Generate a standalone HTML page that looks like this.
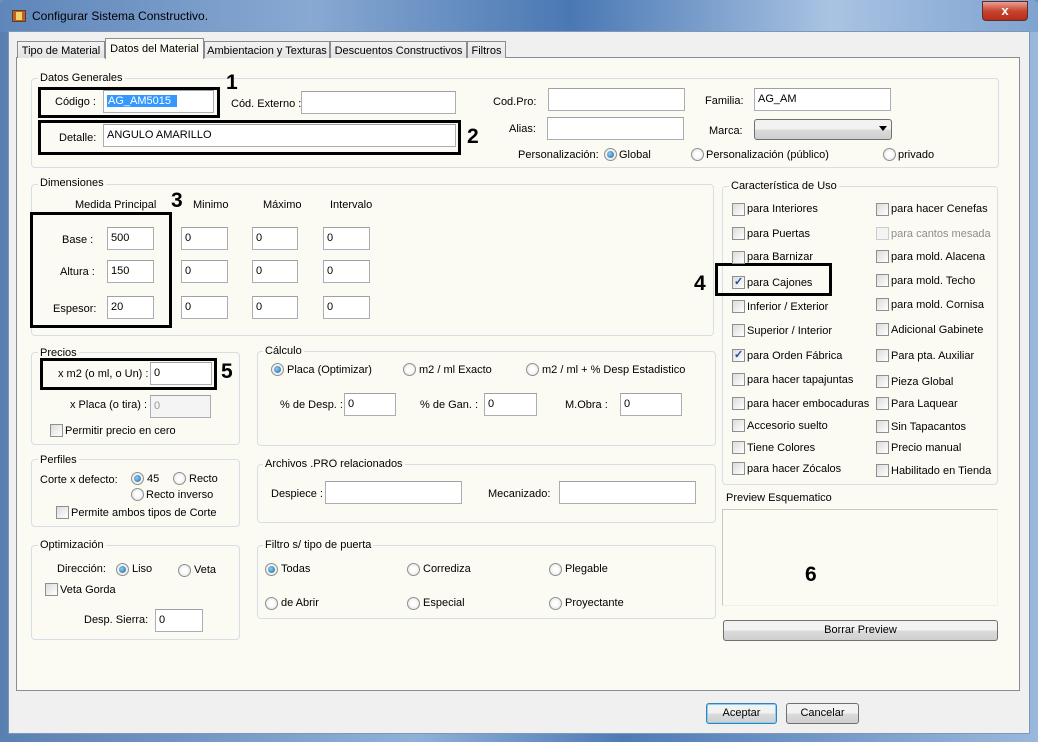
<!DOCTYPE html><html><head><meta charset="utf-8"><style>
*{box-sizing:border-box;margin:0;padding:0}
body{width:1038px;height:742px;position:relative;overflow:hidden;font-family:"Liberation Sans",Arial,sans-serif;font-size:11px;color:#000;background:#6d8fb8}
div,span{position:absolute}
.t{white-space:nowrap;line-height:14px}
.in{background:#fff;border:1px solid #abadb3;border-top-color:#a0a0a0;height:23px;padding:2px 3px;line-height:16px}
.gb{border:1px solid #d5dfe5;border-radius:4px}
.gl{background:#fbfbf4;padding:0 2px;line-height:14px;white-space:nowrap}
.rb{width:13px;height:13px;border-radius:50%;border:1px solid #8e8f8f;background:radial-gradient(circle,#fff 30%,#dcdcdc 100%)}
.rb.on::after{content:"";position:absolute;left:2px;top:2px;width:7px;height:7px;border-radius:50%;background:radial-gradient(circle at 40% 40%,#8ad0f5,#1c5f9c)}
.cb{width:13px;height:13px;border:1px solid #8e8f8f;background:linear-gradient(135deg,#dcdcdc,#fff)}
.cb.on::after{content:"✓";position:absolute;left:1px;top:-2px;font-size:11px;color:#224aa0;font-weight:bold}
.bx{border:3px solid #000}
.num{font-size:21px;font-weight:bold;line-height:22px}
.btn{border:1px solid #707070;border-radius:3px;background:linear-gradient(#f2f2f2 50%,#dcdcdc 50%,#cfcfcf);text-align:center;line-height:18px}
.tab{white-space:nowrap;line-height:14px;height:17px;border:1px solid #898c95;border-bottom:none;background:linear-gradient(#f3f3f3,#e3e3e3);padding:2px 0;text-align:center}
</style></head><body>
<div style="left:0;top:0;width:1038px;height:742px;background:linear-gradient(90deg,#5a80b2,#8fb1d8 40%,#4f7bb5 60%,#9ab8dc);border-radius:6px 6px 0 0"></div>
<div style="left:0;top:0;width:1038px;height:32px;background:linear-gradient(90deg,#5f86ba,#88a9d2 30%,#4a78b3 55%,#a9c3e3 80%,#7fa3d0);border-radius:6px 6px 0 0"></div>
<div style="left:12px;top:10px;width:14px;height:12px;background:#b3632a;border:1px solid #6b3a15"></div>
<div style="left:16px;top:12px;width:6px;height:8px;background:#f2d16b"></div>
<div class="t" style="left:32px;top:9px;font-size:12px">Configurar Sistema Constructivo.</div>
<div style="left:982px;top:1px;width:46px;height:20px;border:1px solid #5b2d2d;border-radius:0 0 4px 4px;background:linear-gradient(#e8a093,#c7442e 50%,#b52d1a);color:#fff;font-weight:bold;text-align:center;line-height:18px;font-size:13px">x</div>
<div style="left:8px;top:31px;width:1022px;height:703px;background:#f0f0f0;border:1px solid #7f97b6"></div>
<div style="left:16px;top:57px;width:1004px;height:634px;background:#fbfbf4;border:1px solid #898c95"></div>
<div class="tab" style="left:17px;top:41px;width:88px">Tipo de Material</div>
<div class="tab" style="left:105px;top:38px;width:99px;height:21px;background:#fbfbf4;padding-top:3px">Datos del Material</div>
<div class="tab" style="left:204px;top:41px;width:126px">Ambientacion y Texturas</div>
<div class="tab" style="left:330px;top:41px;width:137px">Descuentos Constructivos</div>
<div class="tab" style="left:467px;top:41px;width:39px">Filtros</div>

<div class="gb" style="left:31px;top:78px;width:968px;height:90px"></div>
<div class="gl" style="left:38px;top:71px">Datos Generales</div>
<div class="bx" style="left:38px;top:87px;width:182px;height:31px"></div>
<div class="num" style="left:226px;top:72px">1</div>
<div class="t" style="left:55px;top:95px">Código :</div>
<div class="in" style="left:103px;top:90px;width:111px"><span style="position:static;background:#3399ff;color:#fff;padding:0 6px 0 1px">AG_AM5015</span></div>
<div class="t" style="left:231px;top:97px">Cód. Externo :</div>
<div class="in" style="left:301px;top:91px;width:155px"></div>
<div class="bx" style="left:38px;top:120px;width:423px;height:35px"></div>
<div class="num" style="left:467px;top:126px">2</div>
<div class="t" style="left:59px;top:131px">Detalle:</div>
<div class="in" style="left:103px;top:124px;width:353px">ANGULO AMARILLO</div>
<div class="t" style="left:493px;top:95px">Cod.Pro:</div>
<div class="in" style="left:548px;top:88px;width:137px"></div>
<div class="t" style="left:509px;top:122px">Alias:</div>
<div class="in" style="left:547px;top:117px;width:137px"></div>
<div class="t" style="left:705px;top:94px">Familia:</div>
<div class="in" style="left:754px;top:88px;width:137px">AG_AM</div>
<div class="t" style="left:709px;top:124px">Marca:</div>
<div style="left:754px;top:119px;width:138px;height:21px;border:1px solid #707070;border-radius:3px;background:linear-gradient(#f2f2f2 50%,#dcdcdc 50%,#cfcfcf)"><span style="right:4px;top:6px;width:0;height:0;border:4px solid transparent;border-top:5px solid #000"></span></div>
<div class="t" style="left:518px;top:148px">Personalización:</div>
<div class="rb on" style="left:604px;top:148px"></div><div class="t" style="left:619px;top:148px">Global</div>
<div class="rb" style="left:691px;top:148px"></div><div class="t" style="left:706px;top:148px">Personalización (público)</div>
<div class="rb" style="left:883px;top:148px"></div><div class="t" style="left:898px;top:148px">privado</div>

<div class="gb" style="left:31px;top:184px;width:683px;height:152px"></div>
<div class="gl" style="left:38px;top:176px">Dimensiones</div>
<div class="t" style="left:75px;top:198px">Medida Principal</div>
<div class="num" style="left:171px;top:190px">3</div>
<div class="t" style="left:193px;top:198px">Minimo</div>
<div class="t" style="left:263px;top:198px">Máximo</div>
<div class="t" style="left:330px;top:198px">Intervalo</div>
<div class="bx" style="left:30px;top:212px;width:142px;height:116px"></div>
<div class="t" style="left:62px;top:233px">Base :</div>
<div class="t" style="left:60px;top:265px">Altura :</div>
<div class="t" style="left:53px;top:302px">Espesor:</div>
<div class="in" style="left:107px;top:227px;width:47px">500</div>
<div class="in" style="left:107px;top:260px;width:47px">150</div>
<div class="in" style="left:107px;top:296px;width:47px">20</div>
<div class="in" style="left:181px;top:227px;width:47px">0</div><div class="in" style="left:252px;top:227px;width:46px">0</div><div class="in" style="left:323px;top:227px;width:47px">0</div>
<div class="in" style="left:181px;top:260px;width:47px">0</div><div class="in" style="left:252px;top:260px;width:46px">0</div><div class="in" style="left:323px;top:260px;width:47px">0</div>
<div class="in" style="left:181px;top:296px;width:47px">0</div><div class="in" style="left:252px;top:296px;width:46px">0</div><div class="in" style="left:323px;top:296px;width:47px">0</div>

<div class="gb" style="left:31px;top:352px;width:209px;height:93px"></div>
<div class="gl" style="left:38px;top:346px">Precios</div>
<div class="bx" style="left:40px;top:358px;width:177px;height:32px"></div>
<div class="num" style="left:221px;top:361px">5</div>
<div class="t" style="left:58px;top:367px">x m2 (o ml, o Un) :</div>
<div class="in" style="left:150px;top:362px;width:62px">0</div>
<div class="t" style="left:70px;top:398px">x Placa (o tira) :</div>
<div class="in" style="left:150px;top:395px;width:61px;background:#f4f4f4;color:#999">0</div>
<div class="cb" style="left:50px;top:424px"></div><div class="t" style="left:65px;top:424px">Permitir precio en cero</div>

<div class="gb" style="left:31px;top:459px;width:209px;height:68px"></div>
<div class="gl" style="left:38px;top:453px">Perfiles</div>
<div class="t" style="left:40px;top:473px">Corte x defecto:</div>
<div class="rb on" style="left:131px;top:472px"></div><div class="t" style="left:147px;top:472px">45</div>
<div class="rb" style="left:173px;top:472px"></div><div class="t" style="left:189px;top:472px">Recto</div>
<div class="rb" style="left:131px;top:488px"></div><div class="t" style="left:146px;top:488px">Recto inverso</div>
<div class="cb" style="left:56px;top:506px"></div><div class="t" style="left:71px;top:506px">Permite ambos tipos de Corte</div>

<div class="gb" style="left:31px;top:545px;width:209px;height:95px"></div>
<div class="gl" style="left:38px;top:538px">Optimización</div>
<div class="t" style="left:57px;top:562px">Dirección:</div>
<div class="rb on" style="left:116px;top:563px"></div><div class="t" style="left:132px;top:562px">Liso</div>
<div class="rb" style="left:178px;top:564px"></div><div class="t" style="left:194px;top:563px">Veta</div>
<div class="cb" style="left:45px;top:583px"></div><div class="t" style="left:60px;top:583px">Veta Gorda</div>
<div class="t" style="left:84px;top:613px">Desp. Sierra:</div>
<div class="in" style="left:155px;top:609px;width:48px">0</div>

<div class="gb" style="left:257px;top:351px;width:459px;height:95px"></div>
<div class="gl" style="left:263px;top:344px">Cálculo</div>
<div class="rb on" style="left:271px;top:363px"></div><div class="t" style="left:287px;top:363px">Placa (Optimizar)</div>
<div class="rb" style="left:403px;top:363px"></div><div class="t" style="left:419px;top:363px">m2 / ml Exacto</div>
<div class="rb" style="left:526px;top:363px"></div><div class="t" style="left:542px;top:363px">m2 / ml + % Desp Estadistico</div>
<div class="t" style="left:280px;top:398px">% de Desp. :</div>
<div class="in" style="left:344px;top:393px;width:52px">0</div>
<div class="t" style="left:420px;top:398px">% de Gan. :</div>
<div class="in" style="left:484px;top:393px;width:53px">0</div>
<div class="t" style="left:565px;top:398px">M.Obra :</div>
<div class="in" style="left:620px;top:393px;width:62px">0</div>

<div class="gb" style="left:257px;top:464px;width:459px;height:59px"></div>
<div class="gl" style="left:263px;top:457px">Archivos .PRO relacionados</div>
<div class="t" style="left:271px;top:487px">Despiece :</div>
<div class="in" style="left:325px;top:481px;width:137px"></div>
<div class="t" style="left:488px;top:487px">Mecanizado:</div>
<div class="in" style="left:559px;top:481px;width:137px"></div>

<div class="gb" style="left:257px;top:545px;width:459px;height:74px"></div>
<div class="gl" style="left:263px;top:538px">Filtro s/ tipo de puerta</div>
<div class="rb on" style="left:265px;top:563px"></div><div class="t" style="left:281px;top:562px">Todas</div>
<div class="rb" style="left:407px;top:563px"></div><div class="t" style="left:423px;top:562px">Corrediza</div>
<div class="rb" style="left:549px;top:563px"></div><div class="t" style="left:565px;top:562px">Plegable</div>
<div class="rb" style="left:265px;top:597px"></div><div class="t" style="left:281px;top:596px">de Abrir</div>
<div class="rb" style="left:407px;top:597px"></div><div class="t" style="left:423px;top:596px">Especial</div>
<div class="rb" style="left:549px;top:597px"></div><div class="t" style="left:565px;top:596px">Proyectante</div>

<div class="gb" style="left:722px;top:186px;width:276px;height:299px"></div>
<div class="gl" style="left:729px;top:179px">Característica de Uso</div>
<div class="num" style="left:694px;top:273px">4</div>
<div class="bx" style="left:715px;top:263px;width:117px;height:33px"></div>
<div class="cb" style="left:732px;top:203px"></div><div class="t" style="left:747px;top:202px">para Interiores</div>
<div class="cb" style="left:732px;top:227px"></div><div class="t" style="left:747px;top:227px">para Puertas</div>
<div class="cb" style="left:732px;top:251px"></div><div class="t" style="left:747px;top:250px">para Barnizar</div>
<div class="cb on" style="left:732px;top:276px"></div><div class="t" style="left:747px;top:276px">para Cajones</div>
<div class="cb" style="left:732px;top:300px"></div><div class="t" style="left:747px;top:300px">Inferior / Exterior</div>
<div class="cb" style="left:732px;top:324px"></div><div class="t" style="left:747px;top:324px">Superior / Interior</div>
<div class="cb on" style="left:732px;top:349px"></div><div class="t" style="left:747px;top:349px">para Orden Fábrica</div>
<div class="cb" style="left:732px;top:373px"></div><div class="t" style="left:747px;top:373px">para hacer tapajuntas</div>
<div class="cb" style="left:732px;top:397px"></div><div class="t" style="left:747px;top:397px">para hacer embocaduras</div>
<div class="cb" style="left:732px;top:419px"></div><div class="t" style="left:747px;top:419px">Accesorio suelto</div>
<div class="cb" style="left:732px;top:441px"></div><div class="t" style="left:747px;top:441px">Tiene Colores</div>
<div class="cb" style="left:732px;top:462px"></div><div class="t" style="left:747px;top:462px">para hacer Zócalos</div>
<div class="cb" style="left:876px;top:203px"></div><div class="t" style="left:891px;top:202px">para hacer Cenefas</div>
<div class="cb" style="left:876px;top:227px;border-color:#ccc;background:#f4f4f4"></div><div class="t" style="left:891px;top:227px;color:#8d8d8d">para cantos mesada</div>
<div class="cb" style="left:876px;top:250px"></div><div class="t" style="left:891px;top:250px">para mold. Alacena</div>
<div class="cb" style="left:876px;top:274px"></div><div class="t" style="left:891px;top:274px">para mold. Techo</div>
<div class="cb" style="left:876px;top:298px"></div><div class="t" style="left:891px;top:298px">para mold. Cornisa</div>
<div class="cb" style="left:876px;top:323px"></div><div class="t" style="left:891px;top:323px">Adicional Gabinete</div>
<div class="cb" style="left:876px;top:349px"></div><div class="t" style="left:891px;top:349px">Para pta. Auxiliar</div>
<div class="cb" style="left:876px;top:375px"></div><div class="t" style="left:891px;top:375px">Pieza Global</div>
<div class="cb" style="left:876px;top:397px"></div><div class="t" style="left:891px;top:397px">Para Laquear</div>
<div class="cb" style="left:876px;top:420px"></div><div class="t" style="left:891px;top:420px">Sin Tapacantos</div>
<div class="cb" style="left:876px;top:441px"></div><div class="t" style="left:891px;top:441px">Precio manual</div>
<div class="cb" style="left:876px;top:464px"></div><div class="t" style="left:891px;top:464px">Habilitado en Tienda</div>

<div class="t" style="left:726px;top:491px">Preview Esquematico</div>
<div style="left:722px;top:509px;width:276px;height:97px;border:1px solid #c9c9c0;border-right-color:#f0f0e8;border-bottom-color:#f0f0e8"></div>
<div class="num" style="left:805px;top:564px">6</div>
<div class="btn" style="left:723px;top:620px;width:275px;height:21px">Borrar Preview</div>

<div class="btn" style="left:706px;top:703px;width:71px;height:21px;border-color:#3c7fb1;box-shadow:inset 0 0 0 1px #7fd3f7">Aceptar</div>
<div class="btn" style="left:786px;top:703px;width:73px;height:21px">Cancelar</div>
</body></html>
